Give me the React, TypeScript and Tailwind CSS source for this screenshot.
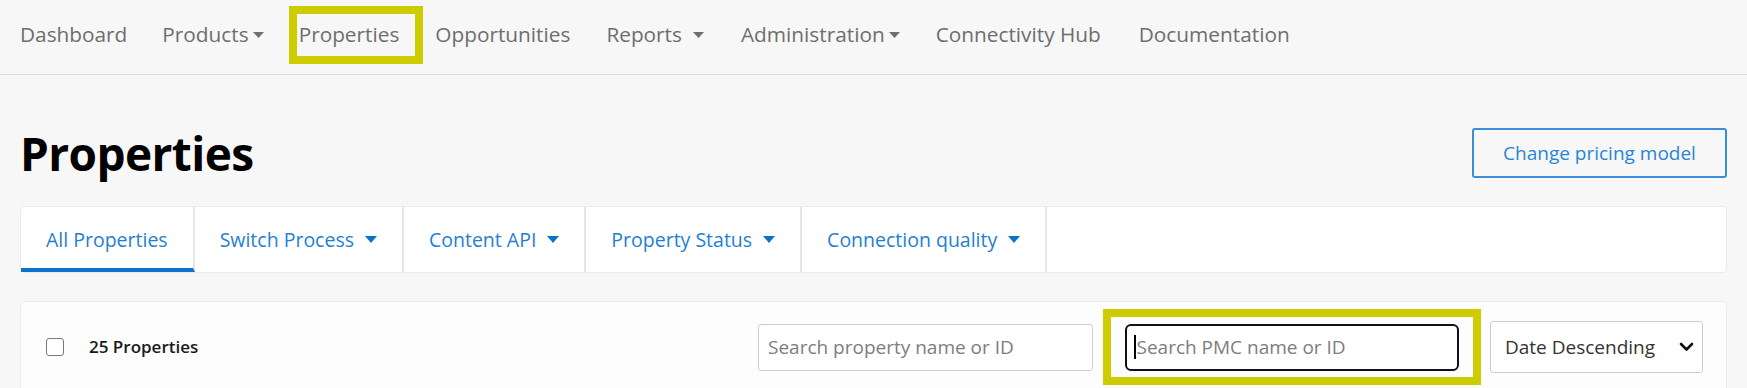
import React from 'react';

const Caret = ({ className }: { className?: string }) => (
  <svg width="12" height="7" viewBox="0 0 12 7" className={className} fill="currentColor">
    <path d="M0 0h12L6 7z" />
  </svg>
);

const NavCaret = () => (
  <svg width="11" height="6" viewBox="0 0 11 6" className="text-[#6f6f6f]" fill="currentColor">
    <path d="M0 0h11L5.5 6z" />
  </svg>
);

export default function App() {
  const tabs = [
    { label: 'Switch Process' },
    { label: 'Content API' },
    { label: 'Property Status' },
    { label: 'Connection quality' },
  ];

  return (
    <div className="min-h-screen w-full bg-[#f7f7f7] font-['Open_Sans',sans-serif] overflow-hidden">
      {/* Top nav */}
      <nav className="flex h-[75px] items-center border-b border-[#dcdcdc] pb-[5px] pl-[20px] text-[20.8px] text-[#6e6e6e]">
        <a>Dashboard</a>
        <a className="ml-[35px] flex items-center gap-[4px]">
          Products
          <NavCaret />
        </a>
        <div className="ml-[25px] flex h-[58px] items-center border-[8px] border-[#cccc00] pl-[2px] pr-[16px]">
          <a>Properties</a>
        </div>
        <a className="ml-[12px]">Opportunities</a>
        <a className="ml-[36px] flex items-center gap-[11px]">
          Reports
          <NavCaret />
        </a>
        <a className="ml-[37px] flex items-center gap-[4px]">
          Administration
          <NavCaret />
        </a>
        <a className="ml-[36px]">Connectivity Hub</a>
        <a className="ml-[38px]">Documentation</a>
      </nav>

      <main className="px-[20px]">
        {/* Page header */}
        <div className="mt-[53px] flex h-[50px] items-center justify-between">
          <h1 className="text-[46px] font-bold leading-[50px] tracking-[-0.6px] text-black">Properties</h1>
          <button className="flex h-[50px] w-[255px] items-center justify-center rounded-[3px] border-2 border-[#3a8ed9] text-[19px] text-[#2a84d5]">
            Change pricing model
          </button>
        </div>

        {/* Tabs */}
        <div className="mt-[28px] flex h-[67px] rounded-[4px] border border-[#ebebeb] bg-white text-[19.5px] text-[#1f7fd2]">
          <div className="flex items-center border-r-2 border-b-[4px] border-r-[#e6e6e6] border-b-[#0a74cc] px-[25px] pt-[4px]">
            All Properties
          </div>
          {tabs.map((t) => (
            <div
              key={t.label}
              className="flex items-center gap-[11px] border-r-2 border-[#e6e6e6] px-[25px]"
            >
              {t.label}
              <Caret className="text-[#0a73cc]" />
            </div>
          ))}
        </div>

        {/* Filter row */}
        <div className="mt-[28px] flex h-[100px] items-start rounded-[4px] border border-[#ececec] bg-[#fdfdfd] pl-[25px] pr-[23px]">
          <div className="flex h-[90px] w-full items-center">
            <span className="h-[18px] w-[18px] rounded-[3px] border-[1.5px] border-[#7a7a7a] bg-white" />
            <span className="ml-[25px] text-[17px] font-semibold text-[#1a1a1a]">25 Properties</span>

            <div className="flex-1" />

            <div className="flex h-[47px] w-[335px] items-center rounded-[3px] border border-[#cdcdcd] bg-white pl-[9px] text-[19px] text-[#7d7d7d]">
              Search property name or ID
            </div>

            <div className="ml-[10px] flex h-[76px] items-center border-[8px] border-[#cccc00] px-[14px]">
              <div className="flex h-[47px] w-[334px] items-center rounded-[6px] border-2 border-[#111] bg-white pl-[7px] text-[19px] text-[#7d7d7d]">
                <span className="h-[24px] w-[1.5px] bg-black" />
                <span className="ml-[1px]">Search PMC name or ID</span>
              </div>
            </div>

            <div className="ml-[9px] flex h-[52px] w-[213px] items-center justify-between rounded-[3px] border border-[#cdcdcd] bg-white pl-[14px] pr-[8px] text-[19px] text-[#333]">
              Date Descending
              <svg width="15" height="10" viewBox="0 0 15 10" fill="none">
                <path d="M2 2l5.5 5.5L13 2" stroke="#111" strokeWidth="2.6" strokeLinecap="round" strokeLinejoin="round" />
              </svg>
            </div>
          </div>
        </div>
      </main>
    </div>
  );
}
